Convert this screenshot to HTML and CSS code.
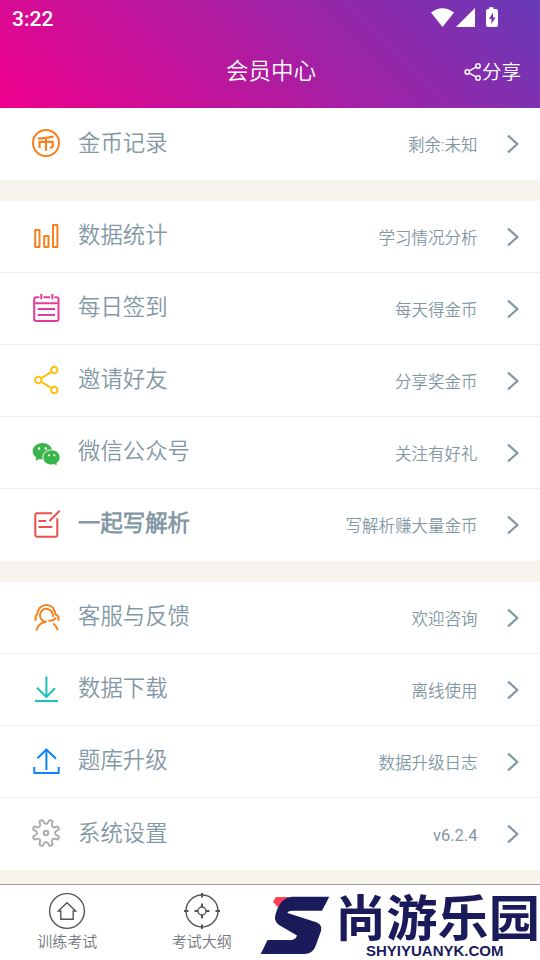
FILE: index.html
```
<!DOCTYPE html>
<html lang="zh-CN">
<head>
<meta charset="utf-8">
<title>会员中心</title>
<link rel="stylesheet" href="styles.css">
</head>
<body>
<header class="header">
  <div class="status">
    <span class="clock">3:22</span>
    <svg class="status-icons" width="68" height="22" viewBox="0 0 68 22" fill="#fff">
      <path d="M0 5.6Q11.500 -3 23 5.600L11.500 20Z"/>
      <path d="M44 1V20H25Z"/>
      <path fill-rule="evenodd" d="M58 .2h4.500v1.800H65q2 0 2 2V18q0 2-2 2H57q-2 0-2-2V4q0-2 2-2h1ZM62 5.500l-4 6.500h2.500v5l4-6.500H62Z"/>
    </svg>
  </div>
  <div class="titlebar">
    <h1 class="title">会员中心</h1>
    <div class="share">
      <svg class="share-icon" width="17" height="19" viewBox="0 0 17 19" fill="none" stroke="#fff" stroke-width="1.5"><circle cx="3.300" cy="9" r="2.200"/><circle cx="14" cy="3" r="2.200"/><circle cx="14" cy="15" r="2.200"/><path d="M5.200 7.800l6.900-3.700M5.200 10.200l6.900 3.700"/></svg>
      <span>分享</span>
    </div>
  </div>
</header>

<svg class="defs" width="0" height="0">
  <symbol id="chevron" viewBox="0 0 12 20"><path d="M1 1.500L10.300 10L1 18.500" fill="none" stroke="#8398a4" stroke-width="2.300"/></symbol>
</svg>

<main>
  <section class="group">
    <div class="row">
      <svg class="icon orange" viewBox="0 0 28 28"><circle cx="14" cy="14" r="13"/><path d="M6 9.700Q14 9.300 21.500 7.700M7.500 19V12.800H20.700V17.300Q20.700 18.800 18 18.500M14 9.500V21.700" stroke-width="2.200" stroke-linejoin="miter"/></svg>
      <span class="label">金币记录</span><span class="note">剩余:未知</span><svg class="chevron"><use href="#chevron"/></svg>
    </div>
  </section>

  <section class="group">
    <div class="row">
      <svg class="icon orange" viewBox="0 0 28 28"><path d="M3.200 8H7.500V25H3.200ZM12.200 14H16.500V25H12.200ZM21 3H25.400V25H21Z"/></svg>
      <span class="label">数据统计</span><span class="note">学习情况分析</span><svg class="chevron"><use href="#chevron"/></svg>
    </div>
    <div class="row">
      <svg class="icon pink" viewBox="0 0 28 28"><path d="M7.300 3.300H4.200Q2.200 3.300 2.200 5.300V25Q2.200 27 4.200 27H24.500Q26.500 27 26.500 25V5.300Q26.500 3.300 24.500 3.300H22.500M11.500 3.300H18.200M9.300 0V5.300M20.400 0V5.300M2.200 9.200H26.500M5.700 15H23M5.700 21H23"/></svg>
      <span class="label">每日签到</span><span class="note">每天得金币</span><svg class="chevron"><use href="#chevron"/></svg>
    </div>
    <div class="row">
      <svg class="icon yellow" viewBox="0 0 28 28"><circle cx="22.300" cy="4" r="3.200"/><circle cx="6.300" cy="14" r="3.200"/><circle cx="22.300" cy="24" r="3.200"/><path d="M9.100 12.300L19.500 5.800M9.100 15.700L19.500 22.200"/></svg>
      <span class="label">邀请好友</span><span class="note">分享奖金币</span><svg class="chevron"><use href="#chevron"/></svg>
    </div>
    <div class="row">
      <svg class="icon wechat" viewBox="0 0 28 28"><path class="leaf" d="M10.500 5C5 5 .7 8.700 .7 13.200c0 2.600 1.400 4.800 3.600 6.200L3.500 23l3.900-2c1 .3 2 .4 3.100.4 5.400 0 9.800-3.500 9.800-8S16 5 10.500 5Z"/><path class="leaf edge" d="M19.600 11.800c-4.900 0-8.800 3.400-8.800 7.600s3.900 7.600 8.800 7.600c1 0 2-.1 2.900-.4l3 1.700-.7-2.900c2-1.400 3.300-3.500 3.300-5.900 0-4.200-3.700-7.700-8.500-7.700Z"/><g class="eye"><circle cx="7" cy="10.500" r="1.300"/><circle cx="13.800" cy="10.500" r="1.300"/><circle cx="17" cy="17.300" r="1.100"/><circle cx="22.300" cy="17.300" r="1.100"/></g></svg>
      <span class="label">微信公众号</span><span class="note">关注有好礼</span><svg class="chevron"><use href="#chevron"/></svg>
    </div>
    <div class="row">
      <svg class="icon red" viewBox="0 0 28 28"><path d="M20 3.300H5.300Q3.300 3.300 3.300 5.300V24.700Q3.300 26.700 5.300 26.700H23.300Q25.300 26.700 25.300 24.700V8.300M27.700 .7L17.500 11M6.500 11H14M6.500 17H20.300"/></svg>
      <span class="label strong">一起写解析</span><span class="note">写解析赚大量金币</span><svg class="chevron"><use href="#chevron"/></svg>
    </div>
  </section>

  <section class="group">
    <div class="row">
      <svg class="icon orange" viewBox="0 0 28 28"><path d="M3.600 17.700V14.500Q3.600 12.500 5 11.700C6 5.500 9.500 2 14.300 2S22.700 5.500 23.700 11.700Q26.500 12.500 26.500 14.500V17.700M20.700 14A6.500 6.500 0 1 0 14 18.800Q6.500 20 4.400 27.500M16.500 17.700Q21.500 18.500 24 14.500M21.200 20.500Q24.500 23 25.700 27.300"/></svg>
      <span class="label">客服与反馈</span><span class="note">欢迎咨询</span><svg class="chevron"><use href="#chevron"/></svg>
    </div>
    <div class="row">
      <svg class="icon teal" viewBox="0 0 28 28"><path d="M14.400 1.500V22M5 12.700L14.400 22L23 13.300M3 26H26"/></svg>
      <span class="label">数据下载</span><span class="note">离线使用</span><svg class="chevron"><use href="#chevron"/></svg>
    </div>
    <div class="row">
      <svg class="icon blue" viewBox="0 0 28 28"><path d="M14.400 23V2.500M5.500 11.300L14.400 2.500L24 11.700M2.300 20V26H26.700V20"/></svg>
      <span class="label">题库升级</span><span class="note">数据升级日志</span><svg class="chevron"><use href="#chevron"/></svg>
    </div>
    <div class="row">
      <svg class="icon gray" viewBox="-14 -14 28 28">
        <path id="tooth" d="M0 -9C2.600 -9 2.400 -12.300 3.600 -12.800Q5.400 -13.100 6.500 -11.600C7 -10.400 4.530 -8.200 6.360 -6.360"/>
        <use href="#tooth" transform="rotate(45)"/><use href="#tooth" transform="rotate(90)"/><use href="#tooth" transform="rotate(135)"/><use href="#tooth" transform="rotate(180)"/><use href="#tooth" transform="rotate(225)"/><use href="#tooth" transform="rotate(270)"/><use href="#tooth" transform="rotate(315)"/>
        <circle r="2.200"/>
      </svg>
      <span class="label">系统设置</span><span class="note version">v6.2.4</span><svg class="chevron"><use href="#chevron"/></svg>
    </div>
  </section>
</main>

<footer class="tabs">
  <div class="tab">
    <svg class="tab-icon" viewBox="0 0 38 38"><circle cx="19" cy="19" r="17.400"/><path d="M10.300 19L19 10.700L27.700 19H25.200V27.300H12.800V19Z"/></svg>
    <span>训练考试</span>
  </div>
  <div class="tab">
    <svg class="tab-icon" viewBox="0 0 38 38"><circle cx="19" cy="19" r="16"/><circle cx="19" cy="19" r="4"/><path d="M19 1V5.500M19 32.500V37M1 19H5.500M32.500 19H37M19 11.500V15M19 23V26.500M11.500 19H15M23 19H26.500" stroke-width="2"/></svg>
    <span>考试大纲</span>
  </div>
  <svg class="brand" width="280" height="75" viewBox="0 0 280 75">
    <path fill="#ff4057" d="M16 12H29L17.500 22L13 16.700Z"/>
    <path fill="#1b1b5c" d="M69.300 11.700L62 25.700H33Q27 26 27.500 28L57 37.500Q62.500 40 61 46L56 60Q53 69 44 69H.7L7.500 55H32Q36 54 37 50.500L19 40Q13.500 36 15.500 29.500Q20 12 33 11.700Z"/>
    <text class="brand-name" x="75" y="50.500" textLength="205" lengthAdjust="spacingAndGlyphs">尚游乐园</text>
    <text class="brand-url" x="106" y="71" textLength="137.500" lengthAdjust="spacingAndGlyphs">SHYIYUANYK.COM</text>
  </svg>
</footer>
</body>
</html>
```
FILE: styles.css
```
* { box-sizing: border-box; }

body {
  margin: 0;
  width: 540px;
  height: 960px;
  overflow: hidden;
  display: flex;
  flex-direction: column;
  background: #f7f4ed;
  color: #8398a4;
  font-family: Roboto, "Noto Sans CJK SC DemiLight", "Noto Sans CJK SC", sans-serif;
  font-weight: 350;
}

.defs { position: absolute; }

.header {
  height: 108px;
  flex: none;
  color: #fff;
  background: linear-gradient(45deg, #f0008c, #673ab7);
}

.status {
  height: 36px;
  padding: 7px 41px 0 12px;
  display: flex;
  justify-content: space-between;
}

.clock {
  font-size: 21px;
  line-height: 24px;
  font-weight: 500;
}

.titlebar {
  height: 72px;
  padding: 0 19px 2px 21px;
  display: grid;
  grid-template-columns: 1fr auto 1fr;
  align-items: center;
}

.title {
  grid-column: 2;
  margin: 0;
  font-size: 22.5px;
  line-height: 32px;
  font-weight: 350;
}

.share {
  justify-self: end;
  display: flex;
  align-items: center;
  gap: 1px;
  font-size: 19.5px;
  line-height: 28px;
  padding-top: 4px;
}

.share-icon { margin-bottom: 1px; }

.group { background: #fff; margin-bottom: 21px; }

.row {
  height: 72px;
  padding: 0 21.5px 0 32px;
  display: flex;
  align-items: center;
  border-bottom: 1px solid #efefef;
}

.row:last-child { border-bottom: 0; }

.icon {
  width: 28px;
  height: 28px;
  flex: none;
  margin-bottom: 2px;
  fill: none;
  stroke: currentColor;
  stroke-width: 2;
  stroke-linejoin: round;
  overflow: visible;
}

.orange { color: #f58220; }
.pink { color: #e23d9a; }
.yellow { color: #ffc010; }
.red { color: #e9504a; }
.teal { color: #1fc0b8; }
.blue { color: #0a84ff; }
.gray { color: #acacac; }

.wechat { stroke: none; }
.leaf { fill: #39b54a; }
.edge { stroke: #fff; stroke-width: 1; }
.eye { fill: #fff; }

.label {
  margin: 0 auto 3px 18px;
  font-size: 22.4px;
  line-height: 32px;
}

.strong { font-weight: 700; margin-bottom: 5px; }

.note {
  font-size: 16.5px;
  line-height: 24px;
  margin: 4px 29px 0 0;
}

.version { font-weight: 400; }

.chevron { width: 12px; height: 20px; flex: none; }

.tabs {
  height: 76px;
  flex: none;
  margin-top: -7px;
  border-top: 1px solid #999;
  background: #fff;
  display: flex;
}

.tab {
  width: 134.5px;
  display: flex;
  flex-direction: column;
  align-items: center;
  padding-top: 7px;
  font-size: 15px;
  line-height: 22px;
  color: #74787d;
}

.tab-icon {
  width: 38px;
  height: 38px;
  margin-bottom: 1px;
  fill: none;
  stroke: #555;
  stroke-width: 1.4;
}

.brand { margin-left: -9px; flex: none; overflow: visible; }

.brand-name {
  font: 700 49px "Noto Sans CJK SC", sans-serif;
  fill: #1b1b5c;
}

.brand-url {
  font: 700 15.4px "Liberation Sans", sans-serif;
  fill: #1b1b5c;
}
```
